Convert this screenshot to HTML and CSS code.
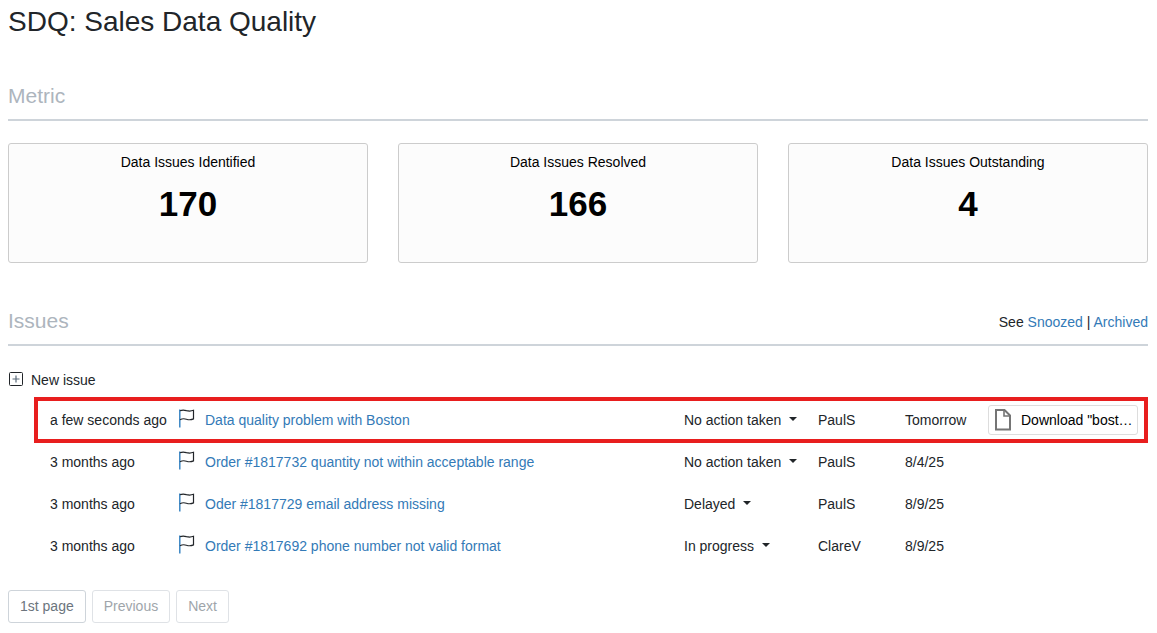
FILE: index.html
```html
<!DOCTYPE html>
<html lang="en">
<head>
    <meta charset="UTF-8">
    <meta name="viewport" content="width=device-width, initial-scale=1.0">
    <title>SDQ: Sales Data Quality</title>
    <link rel="stylesheet" href="styles.css">
</head>
<body>
    <!-- Shared icons -->
    <svg class="hidden">
        <symbol id="icon-flag" viewBox="0 0 16 19">
            <path d="M0.8 0.5V18.5" stroke="#2f7fc0" stroke-width="1.4"/>
            <path d="M1 1.8C3 0.8 5 0.8 7.4 1.6C9.8 2.3 12 2.3 14.5 1.3V9.9C12 11.1 9.8 11 7.4 10.2C5 9.4 3 9.6 1 10.8" stroke="#212529" stroke-width="1.2"/>
        </symbol>
    </svg>

    <header>
        <h1>SDQ: Sales Data Quality</h1>
    </header>

    <main>
        <section class="metric">
            <div class="section-head">
                <h2>Metric</h2>
            </div>
            <div class="cards">
                <div class="card">
                    <p class="card-title">Data Issues Identified</p>
                    <p class="card-value">170</p>
                </div>
                <div class="card">
                    <p class="card-title">Data Issues Resolved</p>
                    <p class="card-value">166</p>
                </div>
                <div class="card">
                    <p class="card-title">Data Issues Outstanding</p>
                    <p class="card-value">4</p>
                </div>
            </div>
        </section>

        <section class="issues">
            <div class="section-head">
                <h2>Issues</h2>
                <p class="see">See <a href="#snoozed">Snoozed</a> | <a href="#archived">Archived</a></p>
            </div>

            <button type="button" class="new-issue">
                <svg width="16" height="16" viewBox="0 0 16 16" fill="none" stroke="#212529">
                    <rect x="1.5" y="0.5" width="13" height="13" rx="1"/>
                    <path d="M8 3.5V10.5M4.5 7H11.5" stroke="#5a6b7b" stroke-width="1.2"/>
                </svg>
                New issue
            </button>

            <table class="issue-table">
                <colgroup>
                    <col class="col-time">
                    <col class="col-flag">
                    <col>
                    <col class="col-status">
                    <col class="col-owner">
                    <col class="col-date">
                    <col class="col-file">
                </colgroup>
                <tbody>
                    <tr class="highlight">
                        <td>a few seconds ago</td>
                        <td><svg class="flag"><use href="#icon-flag"/></svg></td>
                        <td><a href="#boston">Data quality problem with Boston</a></td>
                        <td>
                            <span class="status"><select aria-label="Status">
                                <option selected>No action taken</option>
                                <option>Delayed</option>
                                <option>In progress</option>
                            </select></span>
                        </td>
                        <td>PaulS</td>
                        <td>Tomorrow</td>
                        <td>
                            <button type="button" class="download">
                                <svg width="17" height="22" viewBox="0 0 17 22" fill="none" stroke="#757575" stroke-width="2">
                                    <path d="M2 1H10.5L16 6.5V20.5H2Z"/>
                                    <path d="M10 1V7H16" stroke-width="1.6"/>
                                </svg>
                                <span>Download "bost…</span>
                            </button>
                        </td>
                    </tr>
                    <tr>
                        <td>3 months ago</td>
                        <td><svg class="flag"><use href="#icon-flag"/></svg></td>
                        <td><a href="#1817732">Order #1817732 quantity not within acceptable range</a></td>
                        <td>
                            <span class="status"><select aria-label="Status">
                                <option selected>No action taken</option>
                                <option>Delayed</option>
                                <option>In progress</option>
                            </select></span>
                        </td>
                        <td>PaulS</td>
                        <td>8/4/25</td>
                        <td></td>
                    </tr>
                    <tr>
                        <td>3 months ago</td>
                        <td><svg class="flag"><use href="#icon-flag"/></svg></td>
                        <td><a href="#1817729">Oder #1817729 email address missing</a></td>
                        <td>
                            <span class="status"><select aria-label="Status">
                                <option>No action taken</option>
                                <option selected>Delayed</option>
                                <option>In progress</option>
                            </select></span>
                        </td>
                        <td>PaulS</td>
                        <td>8/9/25</td>
                        <td></td>
                    </tr>
                    <tr>
                        <td>3 months ago</td>
                        <td><svg class="flag"><use href="#icon-flag"/></svg></td>
                        <td><a href="#1817692">Order #1817692 phone number not valid format</a></td>
                        <td>
                            <span class="status"><select aria-label="Status">
                                <option>No action taken</option>
                                <option>Delayed</option>
                                <option selected>In progress</option>
                            </select></span>
                        </td>
                        <td>ClareV</td>
                        <td>8/9/25</td>
                        <td></td>
                    </tr>
                </tbody>
            </table>

            <nav class="pager">
                <button type="button">1st page</button>
                <button type="button" disabled>Previous</button>
                <button type="button" disabled>Next</button>
            </nav>
        </section>
    </main>
</body>
</html>
```
FILE: styles.css
```css
* {
    box-sizing: border-box;
}
body {
    margin: 0;
    padding: 5px 9px 8px 8px;
    background-color: #fff;
    color: #212529;
    font-family: "Liberation Sans", Arial, sans-serif;
    font-size: 14px;
    line-height: 20px;
}
h1, h2, p {
    margin: 0;
    font-weight: 400;
}
h1 {
    font-size: 28px;
    line-height: 34px;
}
a {
    color: #337ab7;
    text-decoration: none;
}
a:hover {
    text-decoration: underline;
}
button, select {
    font: inherit;
    cursor: pointer;
}
.hidden {
    display: none;
}

/* Section headings */
.section-head {
    display: flex;
    justify-content: space-between;
    align-items: flex-end;
    padding-bottom: 10px;
    border-bottom: 2px solid #ced4da;
}
.section-head h2 {
    color: #adb5bd;
    font-size: 21px;
    line-height: 26px;
}
.section-head .see {
    padding-bottom: 2px;
}
.metric {
    margin-top: 44px;
}
.issues {
    margin-top: 45px;
}

/* Metric cards */
.cards {
    display: grid;
    grid-template-columns: repeat(3, 1fr);
    gap: 30px;
    margin-top: 22px;
}
.card {
    min-height: 120px;
    padding: 8px;
    background-color: #fcfcfc;
    border: 1px solid #ccc;
    border-radius: 3px;
    color: #000;
    text-align: center;
}
.card-value {
    margin-top: 12px;
    font-size: 35px;
    font-weight: 700;
    line-height: 40px;
}

/* Issue list */
.new-issue {
    display: flex;
    align-items: center;
    gap: 7px;
    margin-top: 24px;
    padding: 0;
    background: none;
    border: none;
    color: #212529;
}
.issue-table {
    width: calc(100% - 30px);
    margin: 9px 2px 0 28px;
    table-layout: fixed;
    border-collapse: collapse;
}
.issue-table td {
    height: 42px;
    padding: 0;
    vertical-align: middle;
    white-space: nowrap;
}
.issue-table td:first-child {
    padding-left: 14px;
}
.col-time {
    width: 143px;
}
.col-flag {
    width: 26px;
}
.col-status {
    width: 134px;
}
.col-owner {
    width: 87px;
}
.col-date {
    width: 83px;
}
.col-file {
    width: 158px;
}
.highlight {
    outline: 4px solid #e81e1e;
    outline-offset: -2px;
}
.flag {
    display: block;
    width: 16px;
    height: 19px;
    margin-bottom: 3px;
    fill: none;
}
.status {
    display: flex;
    align-items: center;
    gap: 8px;
}
.status::after {
    content: "";
    margin-bottom: 2px;
    border-top: 4px solid #212529;
    border-left: 4px solid transparent;
    border-right: 4px solid transparent;
}
.status select {
    appearance: none;
    field-sizing: content;
    padding: 0;
    background: none;
    border: none;
    color: #212529;
}
.download {
    display: flex;
    align-items: center;
    gap: 10px;
    width: 150px;
    height: 30px;
    padding: 0 4px 0 5px;
    background-color: #fff;
    border: 1px solid #ddd;
    border-radius: 3px;
    color: #000;
}
.download svg {
    flex: none;
}

/* Pagination */
.pager {
    display: flex;
    gap: 6px;
    margin-top: 23px;
}
.pager button {
    padding: 5px 11px 6px;
    background-color: #fff;
    border: 1px solid #ced4da;
    border-radius: 3px;
    color: #6c757d;
}
.pager button:disabled {
    opacity: 0.65;
    cursor: default;
}
```
